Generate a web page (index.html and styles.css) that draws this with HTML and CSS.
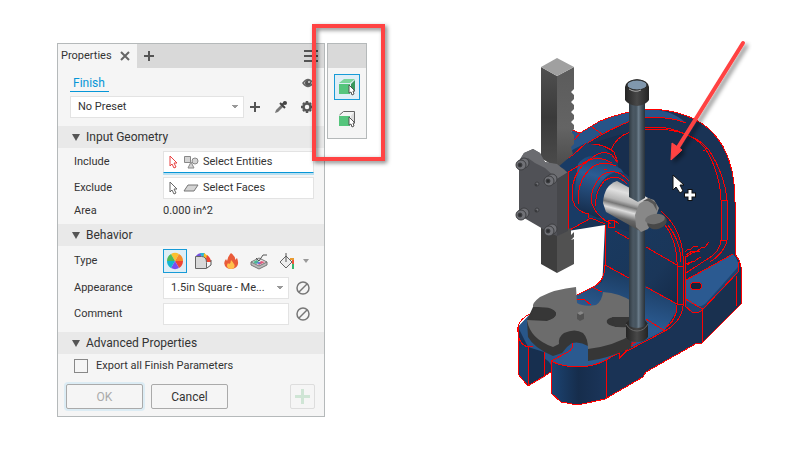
FILE: index.html
```html
<!DOCTYPE html>
<html lang="en">
<head>
    <meta charset="UTF-8">
    <meta name="viewport" content="width=device-width, initial-scale=1.0">
    <title>Finish Properties</title>
    <link rel="stylesheet" href="styles.css">
</head>
<body>
    <main class="workspace">
        <!-- Properties panel -->
        <form class="panel">
            <div class="tabs">
                <div class="tab">
                    <span>Properties</span>
                    <button type="button" class="icon-btn" aria-label="Close"><svg width="10" height="10" viewBox="0 0 10 10"><path d="M1 1l8 8M9 1l-8 8" stroke="#666" stroke-width="2"/></svg></button>
                </div>
                <button type="button" class="icon-btn" aria-label="Add tab"><svg width="10" height="10" viewBox="0 0 10 10"><path d="M5 0v10M0 5h10" stroke="#555" stroke-width="2"/></svg></button>
                <button type="button" class="icon-btn menu" aria-label="Menu"><svg width="14" height="12" viewBox="0 0 14 12"><path d="M0 1h14M0 6h14M0 11h14" stroke="#555" stroke-width="2"/></svg></button>
            </div>

            <div class="crumb">
                <a href="#">Finish</a>
                <button type="button" class="icon-btn" aria-label="Preview"><svg width="12" height="10" viewBox="0 0 12 10"><path d="M1 5Q6-2 11 5Q6 12 1 5z" fill="#f5f5f5" stroke="#666" stroke-width="1.5"/><circle cx="6" cy="5" r="3" fill="#555"/><circle cx="7" cy="4" r="1" fill="#ddd"/></svg></button>
            </div>

            <div class="preset">
                <select aria-label="Preset"><option>No Preset</option></select>
                <button type="button" class="icon-btn" aria-label="Save preset"><svg width="14" height="14" viewBox="0 0 14 14"><path d="M7 2v10M2 7h10" stroke="#555" stroke-width="2"/></svg></button>
                <button type="button" class="icon-btn" aria-label="Pick"><svg width="14" height="14" viewBox="0 0 14 14"><path d="M1 13l1-3 6-6 2 2-6 6z" fill="#777"/><path d="M6 3l5 5M8 5l3-3" stroke="#444" stroke-width="2"/><circle cx="11" cy="3" r="2" fill="#444"/></svg></button>
                <button type="button" class="icon-btn" aria-label="Settings"><svg width="14" height="14" viewBox="0 0 14 14"><circle cx="7" cy="7" r="3.5" fill="none" stroke="#555" stroke-width="2.5"/><path d="M7 1v2M7 11v2M1 7h2M11 7h2M3 3l1 1M10 10l1 1M11 3l-1 1M4 10l-1 1" stroke="#555" stroke-width="2.5"/></svg></button>
            </div>

            <h2 class="section-title">Input Geometry</h2>
            <div class="rows">
                <div class="row">
                    <span class="label">Include</span>
                    <button type="button" class="field pick active">
                        <svg width="10" height="14" viewBox="0 0 10 14"><path d="M1 1v10l2-2 2 4 2-1-2-4h3z" fill="#fff" stroke="#e84040"/></svg>
                        <svg width="16" height="14" viewBox="0 0 16 14"><g fill="#d4d4d4" stroke="#888"><path d="M1.500 1.500h6v6h-6zM8 7l3 6H5z"/><circle cx="12" cy="6" r="3"/></g></svg>
                        <span>Select Entities</span>
                    </button>
                </div>
                <div class="row">
                    <span class="label">Exclude</span>
                    <button type="button" class="field pick">
                        <svg width="10" height="14" viewBox="0 0 10 14"><path d="M1 1v10l2-2 2 4 2-1-2-4h3z" fill="#fff" stroke="#666"/></svg>
                        <svg width="16" height="14" viewBox="0 0 16 14"><path d="M5 4h10l-4 6H1z" fill="#d4d4d4" stroke="#777"/></svg>
                        <span>Select Faces</span>
                    </button>
                </div>
                <div class="row short">
                    <span class="label">Area</span>
                    <output>0.000 in^2</output>
                </div>
            </div>

            <h2 class="section-title">Behavior</h2>
            <div class="rows">
                <div class="row types">
                    <span class="label">Type</span>
                    <div class="type-list">
                        <button type="button" class="type-btn selected" aria-label="Appearance"><svg width="18" height="18" viewBox="-9 -9 18 18"><path d="M0 0L-4-7A8 8 0 0 1 4-7z" fill="#fbc02d"/><path d="M0 0L4-7A8 8 0 0 1 8 0z" fill="#f78b28"/><path d="M0 0H8A8 8 0 0 1 4 7z" fill="#ee4634"/><path d="M0 0L4 7A8 8 0 0 1-4 7z" fill="#784df0"/><path d="M0 0L-4 7A8 8 0 0 1-8 0z" fill="#12b5cf"/><path d="M0 0H-8A8 8 0 0 1-4-7z" fill="#51b957"/></svg></button>
                        <button type="button" class="type-btn" aria-label="Coating"><svg width="18" height="18" viewBox="0 0 18 18"><path d="M2 4Q4 1 8 1l-1 5z" fill="#7352df"/><path d="M6 1l5 0-2 6z" fill="#27b6d8"/><path d="M10 1l4 3-5 5z" fill="#f7bd27"/><path d="M13 3Q17 6 17 10l-6 0z" fill="#ed4935"/><path d="M1.500 4.500h6q5 0 5 6v6h-11z" fill="#d9d9d9" stroke="#666"/><path d="M13 16l4-3V8" fill="none" stroke="#555"/></svg></button>
                        <button type="button" class="type-btn" aria-label="Heat treatment"><svg width="18" height="18" viewBox="0 0 18 18"><path d="M9 1q5 4 4 7l2-2q3 7-2 10-4 2-8 0-5-4-1-9l1 2q1-5 4-8z" fill="#e95b39"/><path d="M9 8q5 5 3 8-3 2-6 0-2-2 0-5l1 1q2-1 2-4z" fill="#ffc04b"/></svg></button>
                        <button type="button" class="type-btn" aria-label="Texture"><svg width="18" height="18" viewBox="0 0 18 18"><path d="M1 10v3l8 4 8-4v-3z" fill="#bbb" stroke="#777"/><path d="M1 10l8-4 8 4-8 4z" fill="#e6e6e6" stroke="#777"/><path d="M3 10l4-2 2 2-3 2z" fill="#49b991"/><path d="M8 12l3-3 4 1-6 3z" fill="#e35b78"/><path d="M6 11l3 1 2-1-2-1z" fill="#5a6be0"/><path d="M6 6l3 3 4-6h4" fill="none" stroke="#555"/></svg></button>
                        <button type="button" class="type-btn" aria-label="Paint"><svg width="18" height="18" viewBox="0 0 18 18"><path d="M8 4l6 6-6 6-6-6z" fill="#eee" stroke="#666"/><path d="M8 10V1" stroke="#555"/><path d="M12 7h3v3" fill="none" stroke="#e99a31" stroke-width="2"/><path d="M15 8v4" stroke="#ed573c" stroke-width="2"/><path d="M15 12v5" stroke="#35b56e" stroke-width="2"/></svg></button>
                        <span class="arrow"></span>
                    </div>
                </div>
                <div class="row">
                    <label class="label" for="appearance">Appearance</label>
                    <select id="appearance" class="field"><option>1.5in Square - Me...</option></select>
                    <button type="button" class="icon-btn" aria-label="Clear appearance"><svg width="14" height="14" viewBox="0 0 14 14"><circle cx="7" cy="7" r="6" fill="none" stroke="#777" stroke-width="1.500"/><path d="M3 11l8-8" stroke="#777" stroke-width="1.500"/></svg></button>
                </div>
                <div class="row">
                    <label class="label" for="comment">Comment</label>
                    <input type="text" id="comment" class="field">
                    <button type="button" class="icon-btn" aria-label="Clear comment"><svg width="14" height="14" viewBox="0 0 14 14"><circle cx="7" cy="7" r="6" fill="none" stroke="#777" stroke-width="1.500"/><path d="M3 11l8-8" stroke="#777" stroke-width="1.500"/></svg></button>
                </div>
            </div>

            <h2 class="section-title advanced">Advanced Properties</h2>
            <label class="check"><input type="checkbox">Export all Finish Parameters</label>

            <div class="actions">
                <button type="button" class="btn ok" disabled>OK</button>
                <button type="button" class="btn">Cancel</button>
                <button type="button" class="btn apply" aria-label="Apply" disabled><svg width="15" height="15" viewBox="0 0 15 15"><path d="M7.500 0v15M0 7.500h15" stroke="#cfe5d5" stroke-width="3"/></svg></button>
            </div>
        </form>

        <!-- Selection mode toolbar -->
        <aside class="toolbar">
            <div class="toolbar-head"></div>
            <button type="button" class="tool selected" aria-label="Select body"><svg width="20" height="20" viewBox="0 0 20 20"><path d="M2 7h11v10H2z" fill="#55c57c"/><path d="M2 6l5-4h11l-5 4z" fill="#7bd59a"/><path d="M14 7l4-4v10l-4 4z" fill="#38985c"/><path d="M12 8v8l2-1 1 3 2-1-1-3h2z" fill="#fff" stroke="#555"/></svg></button>
            <button type="button" class="tool" aria-label="Select face"><svg width="20" height="20" viewBox="0 0 20 20"><path d="M2 7h11v10H2z" fill="#55c57c"/><path d="M14 7l3-4v11l-3 2z" fill="#ddd"/><path d="M2.500 6l4-3.500h11V13" fill="none" stroke="#666"/><path d="M12 8v8l2-1 1 3 2-1-1-3h2z" fill="#fff" stroke="#555"/></svg></button>
        </aside>
        <div class="callout"></div>

        <!-- Arbor press model -->
        <svg class="model" viewBox="500 30 260 380" role="img" aria-label="Arbor press">
            <defs>
                <linearGradient id="rod"><stop offset="0" stop-color="#303a42"/><stop offset=".25" stop-color="#4b5863"/><stop offset=".45" stop-color="#46545f"/><stop offset=".6" stop-color="#6b7c8a"/><stop offset=".75" stop-color="#4b5863"/><stop offset="1" stop-color="#29323a"/></linearGradient>
                <linearGradient id="cap"><stop offset="0" stop-color="#242424"/><stop offset=".5" stop-color="#484848"/><stop offset="1" stop-color="#242424"/></linearGradient>
                <linearGradient id="steel" x1=".6" y1="0" x2=".35" y2="1"><stop offset="0" stop-color="#959595"/><stop offset=".25" stop-color="#e0e0e0"/><stop offset=".42" stop-color="#b5b5b5"/><stop offset=".5" stop-color="#777"/><stop offset=".6" stop-color="#ddd"/><stop offset=".75" stop-color="#666"/><stop offset="1" stop-color="#3c3c3c"/></linearGradient>
                <linearGradient id="bore" x1=".6" y1="0" x2=".35" y2="1"><stop offset="0" stop-color="#1c426f"/><stop offset=".35" stop-color="#2c5c93"/><stop offset="1" stop-color="#152b49"/></linearGradient>
                <linearGradient id="web" x1="0" y1="0" x2=".7" y2="1"><stop offset="0" stop-color="#193a61"/><stop offset=".7" stop-color="#1a3659"/><stop offset="1" stop-color="#152b49"/></linearGradient>
                <linearGradient id="foot"><stop offset="0" stop-color="#1c4473"/><stop offset=".5" stop-color="#162d4c"/><stop offset="1" stop-color="#1b355a"/></linearGradient>
                <linearGradient id="fillet" x1=".7" y1="0" x2=".3" y2="1"><stop offset="0" stop-color="#183557"/><stop offset=".5" stop-color="#2b5b92"/><stop offset="1" stop-color="#285486"/></linearGradient>
                <linearGradient id="rackL" x1="0" y1="0" x2="0" y2="1"><stop offset="0" stop-color="#505050"/><stop offset=".5" stop-color="#3a3a3a"/><stop offset="1" stop-color="#4c4c4c"/></linearGradient>
                <linearGradient id="rackR" x1="0" y1="0" x2="0" y2="1"><stop offset="0" stop-color="#5b5b5b"/><stop offset=".6" stop-color="#646464"/><stop offset="1" stop-color="#4a4a4a"/></linearGradient>
                <filter id="shadow" x="-20%" y="-20%" width="150%" height="150%"><feDropShadow dx="3" dy="3" stdDeviation="2" flood-opacity=".45"/></filter>
            </defs>

            <!-- frame -->
            <path d="M568 145L572 130L580 133L600 121Q625 111 650 109Q735 112 735 202V254Q740 260 741 267V304L702 343H697L646 372L643 377L605 399L578 405L561 402L551 393V372L528 386L518 374V327L532 313L577 295L593 287Q605 281 605 265V225L568 231z" fill="#1a3355"/>
            <path d="M568 145L572 130L580 133L600 121Q625 111 650 109Q672 110 686 123Q672 117 645 117Q610 126 583 146L560 165z" fill="#275488"/>
            <path d="M583 147Q600 140 630 132L645 128H657Q690 130 705 148Q720 172 721 200V240Q720 250 712 256L686 273L684 250L661 212L610 195z" fill="#172e4e"/>
            <path d="M605 225L640 235L660 211L673 233L677 247V307L662 329L640 312L602 290z" fill="url(#web)"/>
            <path d="M721 200H727V240H721z" fill="#1c3d67"/>
            <path d="M605 265L646 286L676 303V312L665 330L627 350L584 352L551 365L531 334L577 295L602 282z" fill="url(#fillet)"/>
            <path d="M656 212Q681 228 683 256V306Q681 322 665 331Q677 320 677 305V262Q676 235 656 212z" fill="#183556"/>
            <path d="M686 280L733 254Q740 260 738 272L703 309Q700 314 692 311L686 306z" fill="#2b5a91"/>
            <path d="M702 311L738 273L741 268V304L702 343z" fill="#19304f"/>
            <path d="M686 301L697 306Q703 307 707 302L738 267V273L703 310Q699 314 692 313L686 307z" fill="#1e4370"/>
            <ellipse cx="696" cy="286" rx="6" ry="4" fill="#14243c"/>

            <!-- feet -->
            <path d="M518 327L529 315L545 327L571 345L551 363L528 347z" fill="#285689"/>
            <path d="M518 331Q519 343 528 347V386L518 374z" fill="#183d68"/>
            <path d="M528 347L544 352V377L528 386z" fill="#172f4f"/>
            <path d="M551 361L571 349L574 340L590 338L633 345L606 360Q596 366 579 367Q562 367 551 361z" fill="#2b5a90"/>
            <path d="M551 361Q562 367 579 367Q596 366 606 360V399L578 405L561 402L551 393z" fill="url(#foot)"/>

            <!-- frame edges -->
            <g class="edges">
                <path d="M572 130L580 133L600 121Q625 111 650 109Q735 112 735 202V254Q740 260 741 267V304L702 343H697L646 372L643 377L605 399L578 405L561 402L551 393V361M551 372L528 386L518 374V327Q520 318 532 313M577 295L593 287Q605 281 605 265V225"/>
                <path d="M583 146Q620 122 645 117Q672 117 686 123M592 127L602 134M565 151L580 133M583 147Q598 140 614 152L618 163M583 147L602 155M630 132Q616 137 611 150"/>
                <path d="M645 129H657Q690 130 705 148Q720 172 721 200V240Q720 250 712 256L686 273M645 127H662Q696 134 709 150Q725 175 727 200V240Q725 252 710 262M721 200H727M721 240H727M703 151L708 148"/>
                <path d="M646 247L677 265M615 231L629 239M605 265L629 278M646 287L677 304M577 299L585 300L591 305M592 287L602 292"/>
                <path d="M661 211Q681 228 683 256V306Q681 322 665 331L646 319M659 218Q676 235 677 262V305Q677 320 665 328M668 225Q681 242 681 262M677 266H683M677 304H683"/>
                <path d="M686 280L733 254M685 256V306L692 312Q699 314 703 309L738 272V262M702 310V343M736 276V306M686 299L697 306L703 309"/>
                <path d="M665 331L627 351L619 359V351L640 340M619 359L634 341"/>
                <ellipse cx="696" cy="286" rx="6" ry="4"/>
                <path d="M518 327Q517 344 528 347V386M528 347L533 346M544 352V377M551 361Q562 367 579 367Q596 366 606 360V399M606 360L633 345M572 343Q574 348 568 352L551 361"/>
            </g>
            <g class="engraving"><path d="M685 252l3-3 2 1 3-3 5-1M686 255l6-4 4 1 5-4 4-1 4-5M686 257l6-4 5-2 3 1M686 264l5-2 4-1 4-3 2-1M687 265l5-3"/></g>

            <!-- pinion housing -->
            <path d="M553 164L574 149L586 143L604 147L617 160L621 181L610 221L591 218L568 231z" fill="#193b65"/>
            <path d="M578 164Q587 152 602 158L621 169L635 190L616 214L598 218L580 210L573 202z" fill="url(#bore)"/>
            <ellipse cx="614" cy="196" rx="18" ry="25" transform="rotate(23 614 196)" fill="#1b3d68"/>
            <g class="edges">
                <path d="M557 164L573 155L586 143M568 172L592 158Q602 149 612 155L617 162M568 172V231L591 218L605 224M573 201Q569 181 583 165Q595 153 612 163M573 201Q576 212 589 214M579 204Q576 184 589 170Q600 159 616 166M592 204Q589 189 602 175Q616 166 629 181M596 206Q594 194 604 181Q617 172 627 184M592 204Q596 216 611 224M588 214V218M608 220h6v7h-6zM614 220l5 4M604 169h3"/>
            </g>

            <!-- rack -->
            <path d="M541 67L557 76V168L541 158z" fill="url(#rackL)"/>
            <path d="M557 76L574 67V89L571 92L574 95V99L571 102L574 105V109L571 112L574 115V119L571 122L574 125V129L571 132L574 135V144L571 147L573 154L557 168z" fill="url(#rackR)"/>
            <path d="M541 67L557 58L574 67L557 76z" fill="#a0a0a0"/>
            <path d="M541 224L557 232V273L541 264z" fill="#3e3e3e"/>
            <path d="M557 232L571 228V235L574 232V237L571 240L574 239V264L557 273z" fill="#515151"/>

            <!-- clamp plate -->
            <path d="M519 161L524 153L533 149L540 153L545 162L554 164L564 169L568 173V231L557 236L550 233L519 215z" fill="#505156"/>
            <path d="M519 161L524 153L533 149L540 153L545 162L557 164L568 173L557 179L545 168L535 163L528 158z" fill="#6b6c70"/>
            <path d="M557 179L568 172V231L557 236z" fill="#46474b"/>
            <g class="bolts">
                <g><circle cx="524" cy="163" r="5"/><circle cx="521" cy="165" r="5"/><circle cx="520" cy="165" r="2" class="socket"/></g>
                <g><circle cx="552" cy="179" r="5"/><circle cx="549" cy="181" r="5"/><circle cx="548" cy="181" r="2" class="socket"/></g>
                <g><circle cx="524" cy="213" r="5"/><circle cx="521" cy="215" r="5"/><circle cx="520" cy="215" r="2" class="socket"/></g>
                <g><circle cx="552" cy="229" r="5"/><circle cx="549" cy="231" r="5"/><circle cx="548" cy="231" r="2" class="socket"/></g>
                <circle cx="537" cy="184" r="2"/><circle cx="536" cy="185" r="1" class="socket"/>
                <circle cx="537" cy="210" r="2"/><circle cx="536" cy="211" r="1" class="socket"/>
            </g>

            <!-- table disk, side wall then top face -->
            <path d="M527 320L528 337Q534 348 553 356L562 353L567 347L572 343Q580 341 588 346V361Q606 359 631 348L633 324L600 310L533 307z" fill="#363636"/>
            <path d="M576 287L577 303Q584 307 596 305Q602 301 603 292Q620 293 633 302V318L615 317Q605 318 607 323Q610 328 629 327L633 334Q614 346 588 349Q588 338 583 333Q575 328 564 333Q558 337 559 344L553 347Q530 339 527 320L547 321Q557 317 556 313Q553 308 533 307Q532 303 540 297Q555 289 576 287z" fill="#6c6c6c"/>
            <path d="M533 307Q554 306 556 313Q556 319 547 320L533 319zM612 317h20v10H615z" fill="#373737"/>
            <path d="M577 313l4-2 3 2v6l-4 2-3-2z" fill="#535353"/><path d="M577 313l4-2 3 2-4 2z" fill="#888"/>

            <!-- handle rod and hub -->
            <path d="M629 98H645V329H629z" fill="url(#rod)"/>
            <path d="M603 203Q604 185 617 181L650 199L640 231L606 212z" fill="url(#steel)"/>
            <path d="M629 170H645V198L638 202L629 197z" fill="url(#rod)"/>
            <path d="M635 215L639 204L648 198L654 200L659 208L656 216L648 229L641 232L636 227z" fill="#888"/>
            <path d="M643 201l6-3 7 5 1 8-4-7-5-3z" fill="#555"/>
            <ellipse cx="657" cy="222" rx="10" ry="7" fill="#484848" transform="rotate(-17 657 222)"/>
            <ellipse cx="655" cy="219" rx="10" ry="5" fill="#707070" transform="rotate(-8 655 219)"/>
            <path d="M625 87Q626 80 637 79Q648 80 649 87V100Q646 105 637 106Q628 105 625 100z" fill="url(#cap)"/>
            <ellipse cx="637" cy="85" rx="10" ry="5" fill="#8097ad" stroke="#292929"/>
            <path d="M629 89q6 4 12 1" fill="none" stroke="#aaa"/>
            <path d="M626 323Q629 320 629 320V326Q637 330 645 326V320L648 324V337Q645 342 637 342Q628 342 626 337z" fill="url(#cap)"/>
            <path d="M626 324Q630 331 637 331T648 324" fill="none" stroke="#686868"/>

            <!-- pointer and arrow -->
            <g filter="url(#shadow)" fill="#ff4343"><path d="M743 43L677 149" stroke="#ff4343" stroke-width="4" stroke-linecap="round"/><path d="M671 160L672 143L682 150z" stroke="#ff4343"/></g>
            <path d="M673 175V190L676 187L680 193L683 191L680 185H684z" fill="#fff" stroke="#111"/>
            <path d="M690 189V201M684 195H696" stroke="#111" stroke-width="5"/><path d="M690 190V200M685 195H695" stroke="#fff" stroke-width="3"/>
        </svg>
    </main>
</body>
</html>
```
FILE: styles.css
```css
*{
    box-sizing: border-box;
}
body{
    margin: 0;
    background: #fff;
    color: #333;
    font-family: Roboto, sans-serif;
    font-size: 11px;
    line-height: 16px;
}
button, input, select{
    font: inherit;
    color: inherit;
    margin: 0;
}
svg{
    display: block;
    flex: none;
}
.workspace{
    position: relative;
    display: flex;
    align-items: flex-start;
    padding: 30px 40px 0 57px;
}
.panel{
    flex: none;
    width: 268px;
    margin-top: 13px;
    background: #f5f5f5;
    border: 1px solid #b5b9ba;
}
.tabs{
    display: flex;
    align-items: center;
    height: 24px;
    background: #d9d9d9;
    padding-right: 6px;
    gap: 7px;
}
.tab{
    display: flex;
    align-items: center;
    justify-content: space-between;
    width: 79px;
    height: 24px;
    padding: 0 7px 0 3px;
    background: #f5f5f5;
}
.icon-btn{
    display: block;
    border: 0;
    padding: 0;
    background: none;
}
.menu{
    margin-left: auto;
}
.crumb{
    display: flex;
    justify-content: space-between;
    align-items: center;
    height: 28px;
    padding: 6px 10px 4px 12px;
}
.crumb a{
    padding: 0 4px 0 3px;
    color: #0696d7;
    font-size: 12px;
    text-decoration: none;
    border-bottom: 1px solid #0696d7;
}
.preset{
    display: flex;
    align-items: center;
    gap: 12px;
    padding: 0 10px 8px 12px;
}
.preset .icon-btn:nth-child(2){
    margin-left: -8px;
}
.preset select{
    flex: 1;
}
select, .field{
    height: 22px;
    min-width: 0;
    padding: 0 7px;
    border: 1px solid #e3e3e3;
    border-radius: 0;
    background-color: #fff;
}
select{
    appearance: none;
    background-image: linear-gradient(to bottom left, #999 50%, transparent 50%), linear-gradient(to bottom right, #999 50%, transparent 50%);
    background-repeat: no-repeat;
    background-size: 3px 4px;
    background-position: right 8px center, right 5px center;
}
.section-title{
    display: flex;
    align-items: center;
    gap: 6px;
    height: 22px;
    margin: 0;
    padding-left: 14px;
    background: #e9e9e9;
    font-size: 12px;
    font-weight: normal;
}
.section-title::before{
    content: "";
    border: 4px solid transparent;
    border-top: 7px solid #555;
    border-bottom: 0;
}
.rows{
    display: flex;
    flex-direction: column;
    gap: 4px;
    padding: 3px 10px 0 16px;
}
.row{
    display: flex;
    align-items: center;
    height: 22px;
}
.label{
    flex: none;
    width: 89px;
}
.field{
    flex: 1;
}
.row .icon-btn{
    margin: 0 4px 0 7px;
}
.pick{
    display: flex;
    align-items: center;
    gap: 4px;
    padding: 0 5px;
}
.pick.active{
    border-bottom: 1px solid #0696d7;
    box-shadow: 0 2px #b9dff0;
}
.row.short{
    height: 16px;
    margin-bottom: 5px;
}
.row.types{
    height: 24px;
}
.type-list{
    display: flex;
    align-items: center;
    gap: 4px;
}
.type-btn{
    display: grid;
    place-items: center;
    width: 24px;
    height: 24px;
    padding: 0;
    border: 1px solid transparent;
    background: none;
}
.selected{
    border-color: #179bd7;
    background: #dfeef6;
}
.arrow{
    border: 3px solid transparent;
    border-top: 4px solid #999;
    border-bottom: 0;
}
.advanced{
    margin-top: 7px;
}
.check{
    display: flex;
    align-items: center;
    gap: 8px;
    height: 23px;
    padding-left: 16px;
}
.check input{
    appearance: none;
    width: 14px;
    height: 14px;
    border: 1px solid #888;
}
.actions{
    display: flex;
    gap: 8px;
    padding: 7px 9px 7px 8px;
}
.btn{
    display: grid;
    place-items: center;
    width: 77px;
    height: 25px;
    padding: 0;
    border: 1px solid #aaa;
    border-radius: 2px;
    background: #f5f5f5;
    font-size: 12px;
}
.ok{
    color: #aaa;
    box-shadow: 0 0 0 2px #dcecf4;
}
.apply{
    width: 25px;
    margin-left: auto;
    border-color: #ddd;
}
.toolbar{
    display: flex;
    flex: none;
    flex-direction: column;
    align-items: center;
    gap: 6px;
    width: 40px;
    margin: 13px 0 0 2px;
    padding-bottom: 6px;
    border: 1px solid #b5b9ba;
    background: #f5f5f5;
}
.toolbar-head{
    align-self: stretch;
    height: 24px;
    background: #d9d9d9;
}
.tool{
    display: grid;
    place-items: center;
    width: 26px;
    height: 26px;
    padding: 0;
    border: 1px solid transparent;
    background: none;
}
.tool.selected{
    border-color: #179bd7;
    background: #dfeef6;
}
/* red highlight around the toolbar */
.callout{
    position: absolute;
    left: 312px;
    top: 24px;
    width: 73px;
    height: 137px;
    border: 4px solid #ff4343;
    filter: drop-shadow(2px 2px 2px rgba(0, 0, 0, 0.5));
    pointer-events: none;
}
.model{
    flex: 1;
    min-width: 0;
    max-width: 260px;
    margin-left: auto;
}
.edges{
    fill: none;
    stroke: #f00;
    shape-rendering: crispEdges;
}
.engraving{
    fill: none;
    stroke: #f00;
    stroke-width: 1px;
    shape-rendering: crispEdges;
}
.bolts{
    fill: #707176;
    stroke: #3c3d40;
}
.bolts .socket{
    fill: #2d2e30;
}
```
